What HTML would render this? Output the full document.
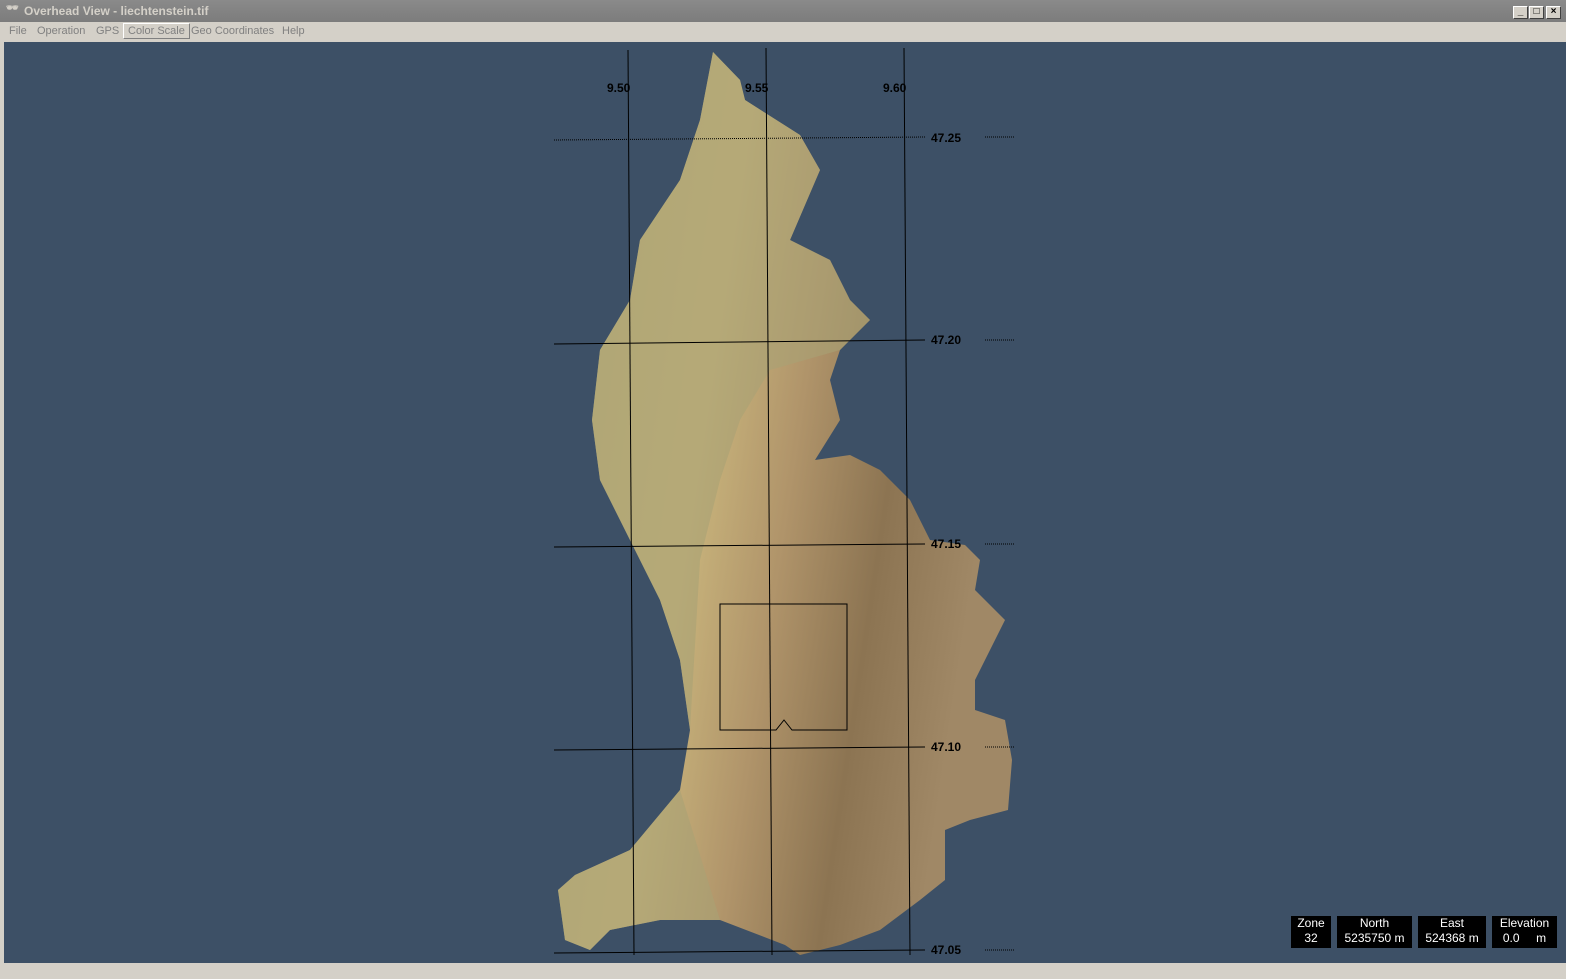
<!DOCTYPE html>
<html><head><style>
body{margin:0;width:1588px;height:979px;overflow:hidden;background:#d4d0c8;font-family:"Liberation Sans",sans-serif;position:relative}
#tb{position:absolute;left:0;top:0;width:1568px;height:22px;background:linear-gradient(#8a8a8a,#7c7c7c);color:#d4d0c8;font:bold 12px "Liberation Sans",sans-serif}
#tb span{position:absolute;left:24px;top:4px}
#menu{position:absolute;left:4px;top:22px;width:1562px;height:19px;font-size:11px;color:#808080}
#menu span{position:absolute;top:3px}
#map{position:absolute;left:4px;top:42px;width:1562px;height:921px;background:#3d5066}
.box{position:absolute;top:916px;height:32px;background:#000;color:#fff;font-size:12px;text-align:center;line-height:15px}
.wb{position:absolute;top:6px;width:13px;height:11px;background:#d4d0c8;border:1px solid #fff;border-right-color:#404040;border-bottom-color:#404040;font-size:10px;line-height:10px;text-align:center;color:#000;font-weight:bold}
</style></head><body>
<div id="tb"><span style="left:6px;top:3px;font-size:10px">🕶</span><span>Overhead View - liechtenstein.tif</span>
<div class="wb" style="left:1513px">_</div><div class="wb" style="left:1529px">□</div><div class="wb" style="left:1546px">×</div></div>
<div id="menu"><span style="left:5px">File</span><span style="left:33px">Operation</span><span style="left:92px">GPS</span>
<span style="left:119px;top:1px;border:1px solid #fff;border-right-color:#808080;border-bottom-color:#808080;padding:1px 4px">Color Scale</span>
<span style="left:187px">Geo Coordinates</span><span style="left:278px">Help</span></div>
<div style="position:absolute;left:1566px;top:0;width:22px;height:979px;background:#fff"></div>
<div id="map"></div>
<svg style="position:absolute;left:0;top:0" width="1588" height="979">
<defs><linearGradient id="g" x1="0" y1="0" x2="1" y2="0.3">
<stop offset="0" stop-color="#b5aa74"/><stop offset="0.4" stop-color="#c9b57c"/><stop offset="0.6" stop-color="#b0946a"/><stop offset="0.8" stop-color="#8c7452"/><stop offset="1" stop-color="#a08866"/></linearGradient></defs>
<polygon fill="url(#g)" points="713,52 740,80 745,100 800,135 820,170 790,240 830,260 850,300 870,320 840,350 830,380 840,420 815,460 850,455 880,470 910,500 930,540 965,545 980,560 975,590 1005,620 990,650 975,680 975,710 1005,720 1012,760 1008,810 970,820 945,830 945,880 920,900 880,930 840,945 800,955 785,945 720,920 660,920 610,930 590,950 565,940 558,890 575,875 630,850 680,790 690,730 680,660 660,600 630,540 600,480 592,420 600,350 630,300 640,240 680,180 700,120"/>
<polygon fill="#a9a274" opacity="0.6" points="713,52 740,80 745,100 800,135 820,170 790,240 830,260 850,300 870,320 840,350 770,370 740,420 720,480 700,560 690,730 680,790 630,850 575,875 558,890 565,940 590,950 610,930 660,920 720,920 680,790 690,730 680,660 660,600 630,540 600,480 592,420 600,350 630,300 640,240 680,180 700,120"/>
<g stroke="#000" stroke-width="1" fill="none">
<line x1="628" y1="50" x2="634" y2="955"/><line x1="766" y1="48" x2="772" y2="955"/><line x1="904" y1="48" x2="910" y2="955"/>
<line x1="554" y1="140" x2="925" y2="137" stroke-dasharray="1 1"/><line x1="985" y1="137" x2="1014" y2="137" stroke-dasharray="1 1"/>
<line x1="554" y1="344" x2="925" y2="340"/><line x1="985" y1="340" x2="1014" y2="340" stroke-dasharray="1 1"/>
<line x1="554" y1="547" x2="925" y2="544"/><line x1="985" y1="544" x2="1014" y2="544" stroke-dasharray="1 1"/>
<line x1="554" y1="750" x2="925" y2="747"/><line x1="985" y1="747" x2="1014" y2="747" stroke-dasharray="1 1"/>
<line x1="554" y1="953" x2="925" y2="950"/><line x1="985" y1="950" x2="1014" y2="950" stroke-dasharray="1 1"/>
<path d="M720,604 H847 V730 H792 L784,720 L776,730 H720 Z"/>
</g>
<g font-family="Liberation Sans" font-size="12" font-weight="bold" fill="#000">
<text x="607" y="92">9.50</text><text x="745" y="92">9.55</text><text x="883" y="92">9.60</text>
<text x="931" y="142">47.25</text><text x="931" y="344">47.20</text><text x="931" y="548">47.15</text><text x="931" y="751">47.10</text><text x="931" y="954">47.05</text>
</g></svg>
<div class="box" style="left:1291px;width:40px">Zone<br>32</div>
<div class="box" style="left:1337px;width:75px">North<br>5235750 m</div>
<div class="box" style="left:1418px;width:68px">East<br>524368 m</div>
<div class="box" style="left:1492px;width:65px">Elevation<br>0.0 &nbsp;&nbsp;&nbsp; m</div>
</body></html>
